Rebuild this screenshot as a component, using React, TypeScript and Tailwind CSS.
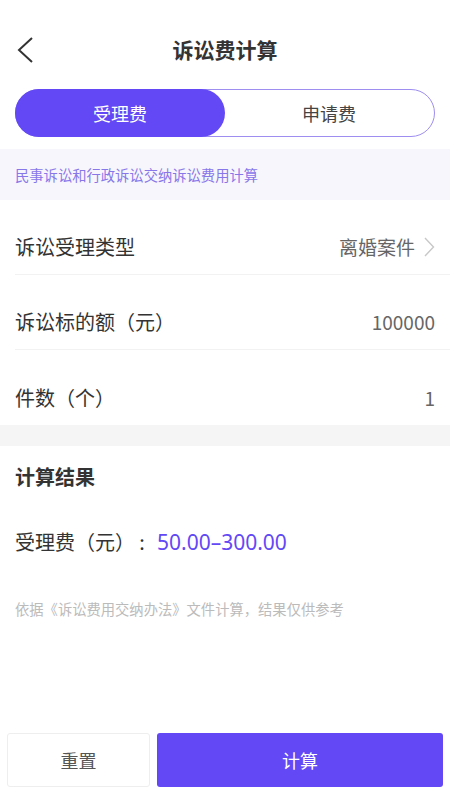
const font = { fontFamily: '"Noto Sans CJK SC", "Noto Sans", sans-serif' };

function Row({ label, value, arrow, last }: { label: string; value: string; arrow?: boolean; last?: boolean }) {
  return (
    <div className={`flex items-center h-[75px] pt-[20px] pr-[15px] ${last ? 'h-[73px]' : 'border-b border-[#f2f2f2]'}`}>
      <span className="flex-1 text-[20px] leading-[30px] text-[#333]">{label}</span>
      <span className="text-[19px] leading-[30px] text-[#666]">{value}</span>
      {arrow && (
        <svg width="12" height="20" viewBox="0 0 12 20" className="ml-[8px]" fill="none">
          <polyline points="2,1 10.5,10 2,19" stroke="#c8c8c8" strokeWidth="1.4" />
        </svg>
      )}
    </div>
  );
}

export default function App() {
  return (
    <div className="w-[450px] h-[800px] bg-white flex flex-col" style={font}>
      {/* Header */}
      <div className="relative flex items-center justify-center h-[50px] mt-[25px]">
        <svg width="18" height="28" viewBox="0 0 18 28" fill="none" className="absolute left-[16px] top-[11px]">
          <polyline points="16,2 3,14 16,26" stroke="#333" strokeWidth="2" />
        </svg>
        <span className="text-[21px] font-bold text-[#333]">诉讼费计算</span>
      </div>

      {/* Tabs */}
      <div className="mx-[15px] mt-[14px] flex h-[48px] rounded-full border border-[#9d8ef0]">
        <div className="w-[210px] -m-px rounded-full bg-[#6348f5] flex items-center justify-center text-white text-[18px]">
          受理费
        </div>
        <div className="flex-1 flex items-center justify-center text-[18px] text-[#444]">申请费</div>
      </div>

      {/* Info */}
      <div className="mt-[12px] h-[51px] bg-[#f7f6fd] flex items-center px-[15px] text-[14.3px] text-[#8877e8]">
        民事诉讼和行政诉讼交纳诉讼费用计算
      </div>

      {/* Form */}
      <div className="pl-[15px]">
        <Row label="诉讼受理类型" value="离婚案件" arrow />
        <Row label="诉讼标的额（元）" value="100000" />
        <Row label="件数（个）" value="1" last />
      </div>

      <div className="h-[21px] bg-[#f5f5f5]" />

      {/* Result */}
      <div className="px-[15px]">
        <div className="pt-[16px] text-[20px] leading-[30px] font-bold text-[#333]">计算结果</div>
        <div className="mt-[35px] flex items-center text-[20px] leading-[30px] text-[#333]">
          <span>受理费（元）</span>
          <span className="w-[14px] text-center">:</span>
          <span className="ml-[8px] text-[21px] text-[#6348f5]" style={{ fontFamily: '"Noto Sans", sans-serif' }}>
            50.00–300.00
          </span>
        </div>
        <div className="mt-[42px] text-[14.3px] leading-[20px] text-[#bbb]">依据《诉讼费用交纳办法》文件计算，结果仅供参考</div>
      </div>

      <div className="flex-1" />

      {/* Buttons */}
      <div className="flex gap-[7px] px-[7px] pb-[13px]">
        <button className="w-[143px] h-[54px] rounded-[3px] border border-[#eee] bg-white text-[18px] text-[#555]">
          重置
        </button>
        <button className="flex-1 h-[54px] rounded-[3px] bg-[#6348f5] text-[18px] text-white">计算</button>
      </div>
    </div>
  );
}
